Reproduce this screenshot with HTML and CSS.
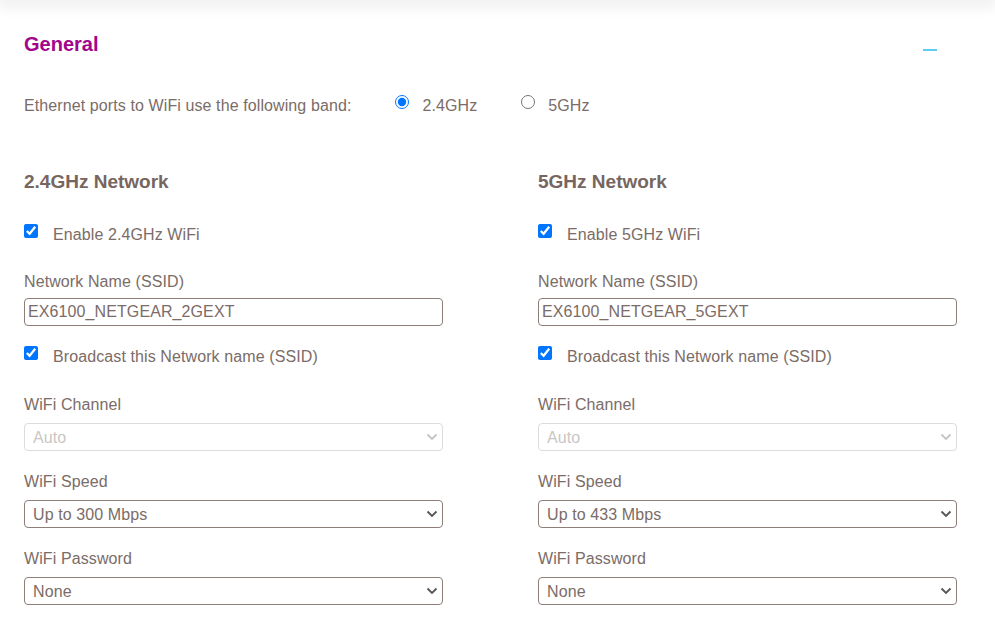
FILE: index.html
```html
<!DOCTYPE html>
<html lang="en">
<head>
<meta charset="utf-8">
<title>General</title>
<link rel="stylesheet" href="styles.css">
</head>
<body>
<div class="topshade"></div>
<section class="panel">
  <div class="panel-head">
    <h1 class="title">General</h1>
    <span class="collapse" aria-label="Collapse"></span>
  </div>

  <div class="band-row">
    <span class="band-label">Ethernet ports to WiFi use the following band:</span>
    <label class="radio-opt"><input type="radio" name="band" checked><span>2.4GHz</span></label>
    <label class="radio-opt"><input type="radio" name="band"><span>5GHz</span></label>
  </div>

  <div class="columns">
    <div class="col">
      <h2 class="net-title">2.4GHz Network</h2>
      <label class="check-row first"><input type="checkbox" checked><span>Enable 2.4GHz WiFi</span></label>
      <div class="field">
        <div class="field-label">Network Name (SSID)</div>
        <input class="text-input" type="text" value="EX6100_NETGEAR_2GEXT">
      </div>
      <label class="check-row"><input type="checkbox" checked><span>Broadcast this Network name (SSID)</span></label>
      <div class="field channel">
        <div class="field-label">WiFi Channel</div>
        <div class="select-wrap disabled">
          <select disabled><option>Auto</option></select>
          <svg class="chev" viewBox="0 0 12 8" width="12" height="8"><path d="M1.5 1.5 L6 6 L10.5 1.5" fill="none" stroke="currentColor" stroke-width="1.8"/></svg>
        </div>
      </div>
      <div class="field">
        <div class="field-label">WiFi Speed</div>
        <div class="select-wrap">
          <select><option>Up to 300 Mbps</option></select>
          <svg class="chev" viewBox="0 0 12 8" width="12" height="8"><path d="M1.5 1.5 L6 6 L10.5 1.5" fill="none" stroke="currentColor" stroke-width="1.8"/></svg>
        </div>
      </div>
      <div class="field">
        <div class="field-label">WiFi Password</div>
        <div class="select-wrap">
          <select><option>None</option></select>
          <svg class="chev" viewBox="0 0 12 8" width="12" height="8"><path d="M1.5 1.5 L6 6 L10.5 1.5" fill="none" stroke="currentColor" stroke-width="1.8"/></svg>
        </div>
      </div>
    </div>

    <div class="col">
      <h2 class="net-title">5GHz Network</h2>
      <label class="check-row first"><input type="checkbox" checked><span>Enable 5GHz WiFi</span></label>
      <div class="field">
        <div class="field-label">Network Name (SSID)</div>
        <input class="text-input" type="text" value="EX6100_NETGEAR_5GEXT">
      </div>
      <label class="check-row"><input type="checkbox" checked><span>Broadcast this Network name (SSID)</span></label>
      <div class="field channel">
        <div class="field-label">WiFi Channel</div>
        <div class="select-wrap disabled">
          <select disabled><option>Auto</option></select>
          <svg class="chev" viewBox="0 0 12 8" width="12" height="8"><path d="M1.5 1.5 L6 6 L10.5 1.5" fill="none" stroke="currentColor" stroke-width="1.8"/></svg>
        </div>
      </div>
      <div class="field">
        <div class="field-label">WiFi Speed</div>
        <div class="select-wrap">
          <select><option>Up to 433 Mbps</option></select>
          <svg class="chev" viewBox="0 0 12 8" width="12" height="8"><path d="M1.5 1.5 L6 6 L10.5 1.5" fill="none" stroke="currentColor" stroke-width="1.8"/></svg>
        </div>
      </div>
      <div class="field">
        <div class="field-label">WiFi Password</div>
        <div class="select-wrap">
          <select><option>None</option></select>
          <svg class="chev" viewBox="0 0 12 8" width="12" height="8"><path d="M1.5 1.5 L6 6 L10.5 1.5" fill="none" stroke="currentColor" stroke-width="1.8"/></svg>
        </div>
      </div>
    </div>
  </div>
</section>
</body>
</html>
```

FILE: styles.css
```css
* { box-sizing: border-box; }

html, body {
  margin: 0;
  padding: 0;
  background: #ffffff;
}

body {
  font-family: "Liberation Sans", Arial, sans-serif;
  font-size: 16px;
  letter-spacing: 0.1px;
  color: #7b6c67;
  overflow: hidden;
}

.topshade {
  height: 0;
  box-shadow: 0 0 16px 3px rgba(0, 0, 0, 0.16);
}

.panel {
  padding: 33px 38px 0 24px;
}

.panel-head {
  display: flex;
  justify-content: space-between;
  align-items: flex-start;
}

.title {
  margin: 0;
  font-size: 20px;
  line-height: 23px;
  font-weight: bold;
  letter-spacing: 0;
  color: #a1068c;
}

.collapse {
  display: block;
  width: 14px;
  height: 2px;
  margin-top: 16px;
  margin-right: 20px;
  background: #5fcdf2;
}

.band-row {
  display: flex;
  align-items: center;
  margin-top: 41px;
  line-height: 18px;
}

.radio-opt {
  display: flex;
  align-items: center;
  margin-left: 44px;
}

.radio-opt input {
  width: 14px;
  height: 14px;
  margin: -8px 13px 0 0;
}

.columns {
  display: grid;
  grid-template-columns: 419px 419px;
  column-gap: 95px;
  margin-top: 56px;
}

.net-title {
  margin: 0;
  font-size: 19px;
  line-height: 22px;
  font-weight: bold;
  letter-spacing: 0;
  color: #76665f;
}

.check-row {
  display: flex;
  align-items: center;
  line-height: 18px;
  margin-top: 21px;
}

.check-row.first {
  margin-top: 33px;
}

.check-row input {
  width: 14px;
  height: 14px;
  margin: -8px 15px 0 0;
}

.field {
  margin-top: 22px;
}

.check-row.first + .field {
  margin-top: 29px;
}

.check-row.first + .field .field-label {
  margin-bottom: 7px;
}

.check-row.first + .field + .check-row {
  margin-top: 22px;
}

.field.channel {
  margin-top: 30px;
}

.field-label {
  line-height: 18px;
  margin-bottom: 9px;
}

.text-input {
  display: block;
  width: 100%;
  height: 28px;
  padding: 0 3px;
  border: 1px solid #8d7e79;
  border-radius: 4px;
  font-family: inherit;
  font-size: 16px;
  letter-spacing: 0.1px;
  color: #7b6c67;
  background: #fff;
  outline: none;
}

.select-wrap {
  position: relative;
  height: 28px;
}

.select-wrap select {
  -webkit-appearance: none;
  appearance: none;
  display: block;
  width: 100%;
  height: 28px;
  padding: 0 24px 0 8px;
  border: 1px solid #8d7e79;
  border-radius: 4px;
  font-family: inherit;
  font-size: 16px;
  letter-spacing: 0.1px;
  color: #7b6c67;
  background: #fff;
  outline: none;
}

.select-wrap .chev {
  position: absolute;
  right: 5px;
  top: 10px;
  width: 12px;
  height: 8px;
  color: #555555;
  pointer-events: none;
}

.select-wrap.disabled select {
  border-color: #dcdcdc;
  color: #c9c6c5;
  opacity: 1;
}

.select-wrap.disabled .chev {
  color: #c4c4c4;
}
```
